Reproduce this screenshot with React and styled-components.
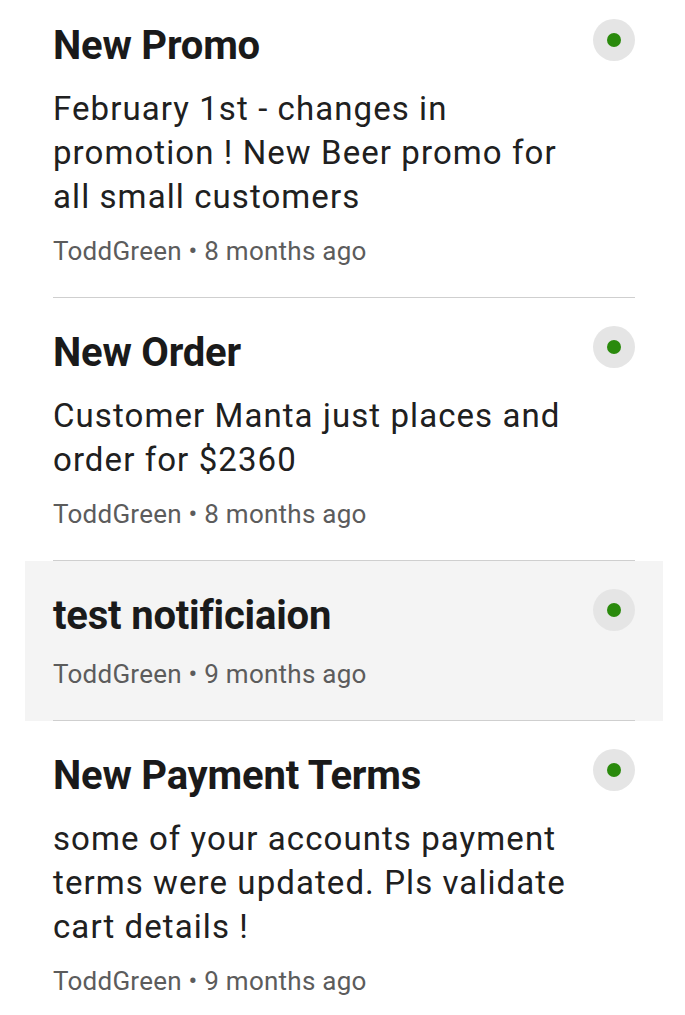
import React from "react";
import styled, { createGlobalStyle } from "styled-components";

const Global = createGlobalStyle`
  html, body { margin: 0; padding: 0; background: #ffffff; }
  body { font-family: Roboto, "Noto Sans", "Liberation Sans", sans-serif; overflow: hidden; }
`;

const List = styled.ul`
  list-style: none;
  margin: -9px 22px 0 25px;
  padding: 0;
`;

const Item = styled.li`
  padding: 0 28px;
  background: ${(p) => (p.$active ? "#f4f4f4" : "transparent")};
`;

const Inner = styled.div`
  display: flex;
  align-items: flex-start;
  gap: 12px;
  padding: 32px 0 28px;
  border-bottom: 1px solid #cfcfcf;
`;

const Content = styled.div`
  flex: 1;
  min-width: 0;
  display: flex;
  flex-direction: column;
`;

const Title = styled.h3`
  margin: 0;
  font-size: 40px;
  line-height: 46px;
  font-weight: 700;
  color: #1a1a1a;
  letter-spacing: -0.2px;
`;

const Body = styled.p`
  margin: 18px 0 0;
  font-size: 33px;
  line-height: 44px;
  font-weight: 400;
  color: #202020;
  letter-spacing: 1.08px;
`;

const Meta = styled.div`
  margin-top: ${(p) => (p.$afterBody ? "14px" : "17px")};
  font-size: 26px;
  line-height: 36px;
  color: #5c5c5c;
  letter-spacing: 0.25px;
`;

const DotButton = styled.span`
  flex: none;
  width: 42px;
  height: 42px;
  margin-top: -4px;
  border-radius: 50%;
  background: #e5e5e5;
  display: flex;
  align-items: center;
  justify-content: center;
`;

const Dot = styled.span`
  width: 14px;
  height: 14px;
  border-radius: 50%;
  background: #2a8a0c;
`;

const items = [
  {
    title: "New Promo",
    body: "February 1st - changes in promotion ! New Beer promo for all small customers",
    meta: "ToddGreen • 8 months ago",
  },
  {
    title: "New Order",
    body: "Customer Manta just places and order for $2360",
    meta: "ToddGreen • 8 months ago",
  },
  {
    title: "test notificiaion",
    body: "",
    meta: "ToddGreen • 9 months ago",
    active: true,
  },
  {
    title: "New Payment Terms",
    body: "some of your accounts payment terms were updated. Pls validate cart details !",
    meta: "ToddGreen • 9 months ago",
  },
];

export default function App() {
  return (
    <>
      <Global />
      <List>
        {items.map((it, i) => (
          <Item key={i} $active={it.active}>
            <Inner>
              <Content>
                <Title>{it.title}</Title>
                {it.body && <Body>{it.body}</Body>}
                <Meta $afterBody={!!it.body}>{it.meta}</Meta>
              </Content>
              <DotButton>
                <Dot />
              </DotButton>
            </Inner>
          </Item>
        ))}
      </List>
    </>
  );
}
